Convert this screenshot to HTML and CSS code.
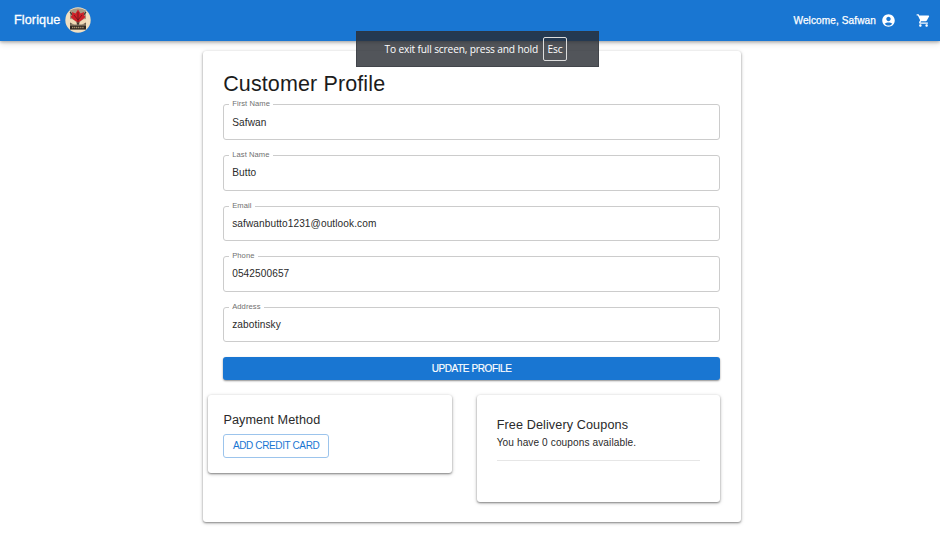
FILE: index.html
```html
<!DOCTYPE html>
<html lang="en">
<head>
<meta charset="utf-8">
<title>Florique - Customer Profile</title>
<link rel="stylesheet" href="styles.css">
</head>
<body>
<header class="appbar">
  <span class="brand">Florique</span>
  <svg class="logo" viewBox="0 0 26 26">
    <circle cx="13" cy="13" r="12.7" fill="#f1dfc0"/>
    <path d="M5 3.5 Q13 -1 21 3.5 V22.5 H5Z" fill="#a99a82"/>
    <path d="M13 9v9M5 5l8 10 8-10M5 17l8-1 8 1" stroke="#3c3029" stroke-width="1.2" fill="none"/>
    <path d="M5 12q5 0 7 5-5 1-7-2zM21 12q-5 0-7 5 5 1 7-2z" fill="#f0d9b6"/>
    <path d="M13 2.5l2.5 4L19 5l-.3 3 1.8 2-3.5 3-4 2.5L9 13l-3.500-3L7.300 8 7 5l3.500 1.500z" fill="#cf2027"/>
    <path d="M13 5v10M9 8l4 5 4-5" stroke="#641719" stroke-width=".8" fill="none"/>
    <path d="M5 18.500h16v4H5z" fill="#2e2620"/>
    <path d="M7 20.500h12" stroke="#a58e6e" stroke-width="1.300" stroke-dasharray="1.300 .6"/>
  </svg>
  <div class="account">
    <span class="welcome">Welcome, Safwan</span>
    <svg class="icon" viewBox="0 0 24 24"><path d="M12 2C6.480 2 2 6.480 2 12s4.480 10 10 10 10-4.480 10-10S17.520 2 12 2m0 4c1.930 0 3.500 1.570 3.500 3.500S13.930 13 12 13s-3.500-1.570-3.500-3.500S10.070 6 12 6m0 14c-2.030 0-4.430-.82-6.140-2.880C7.550 15.800 9.680 15 12 15s4.450.8 6.140 2.120C16.430 19.180 14.030 20 12 20"/></svg>
    <svg class="icon cart" viewBox="0 0 24 24"><path d="M7 18c-1.100 0-1.990.9-1.990 2S5.900 22 7 22s2-.9 2-2-.9-2-2-2M1 2v2h2l3.600 7.590-1.350 2.450c-.16.280-.25.610-.25.960 0 1.100.9 2 2 2h12v-2H7.420c-.14 0-.25-.11-.25-.25l.03-.12.900-1.630h7.450c.75 0 1.410-.41 1.750-1.030l3.580-6.490c.08-.14.120-.31.120-.48 0-.55-.45-1-1-1H5.210l-.94-2zm16 16c-1.100 0-1.990.9-1.990 2s.89 2 1.990 2 2-.9 2-2-.9-2-2-2"/></svg>
  </div>
</header>
<main class="profile">
  <h1>Customer Profile</h1>
  <form class="fields">
    <div class="field"><label>First Name</label><span>Safwan</span></div>
    <div class="field"><label>Last Name</label><span>Butto</span></div>
    <div class="field"><label>Email</label><span>safwanbutto1231@outlook.com</span></div>
    <div class="field"><label>Phone</label><span>0542500657</span></div>
    <div class="field"><label>Address</label><span>zabotinsky</span></div>
    <button type="button" class="update">UPDATE PROFILE</button>
  </form>
  <div class="panels">
    <section class="panel payment">
      <h2>Payment Method</h2>
      <button type="button" class="add">ADD CREDIT CARD</button>
    </section>
    <section class="panel coupons">
      <h2>Free Delivery Coupons</h2>
      <p>You have 0 coupons available.</p>
      <hr>
    </section>
  </div>
</main>
<div class="toast"><span>To exit full screen, press and hold</span><kbd>Esc</kbd></div>
</body>
</html>
```
FILE: styles.css
```css
* { box-sizing: border-box; }
body {
  margin: 0;
  background: #fff;
  color: #2a2a2a;
  font-family: "Liberation Sans", Arial, sans-serif;
  font-size: 10.1px;
  height: 535px;
  overflow: hidden;
}
h1, h2, p { margin: 0; font-weight: 400; white-space: nowrap; }
.appbar {
  display: flex;
  align-items: center;
  height: 40.500px;
  padding: 0 9px 0 14px;
  background: #1976d2;
  color: #fff;
  box-shadow: 0 1px 3px rgba(0,0,0,.3), 0 3px 6px rgba(0,0,0,.12);
}
.brand { font-size: 12.650px; letter-spacing: .1px; -webkit-text-stroke: .3px #fff; }
.logo { width: 26px; height: 26px; margin-left: 5px; }
.account { display: flex; align-items: center; margin-left: auto; }
.welcome { font-size: 10.100px; letter-spacing: .09px; -webkit-text-stroke: .25px #fff; }
.icon { width: 15px; height: 15px; margin-left: 5px; fill: #fff; }
.cart { margin-left: 20px; }
.profile {
  width: 537.500px;
  height: 471px;
  margin: 10px 0 0 203px;
  padding: 20px 20.500px 20px 20.200px;
  border-radius: 3px;
  box-shadow: 0 1px 2px rgba(0,0,0,.38), 0 1px 4px rgba(0,0,0,.2);
}
h1 { font-size: 21.500px; line-height: 27px; letter-spacing: .12px; color: #1c1c1c; }
.fields { display: flex; flex-direction: column; gap: 15px; margin-top: 6.900px; }
.field {
  position: relative;
  display: flex;
  align-items: center;
  height: 35.600px;
  padding-left: 8px;
  border: 1px solid #ccc;
  border-radius: 3px;
  letter-spacing: .1px;
}
.field label {
  position: absolute;
  top: -6px;
  left: 5px;
  padding: 0 3px;
  background: #fff;
  color: #707070;
  font-size: 7.600px;
  line-height: 10px;
  letter-spacing: .07px;
}
button { font: inherit; font-size: 10px; padding: 0; border-radius: 3px; }
.update {
  height: 23px;
  border: 0;
  background: #1976d2;
  color: #fff;
  letter-spacing: -.4px;
  -webkit-text-stroke: .15px #fff;
  box-shadow: 0 1px 2px rgba(0,0,0,.45);
}
.panels { display: flex; align-items: flex-start; gap: 25.200px; margin: 14.600px 0 0 -15px; }
.panel {
  width: 243.600px;
  border-radius: 3px;
  box-shadow: 0 1px 2px rgba(0,0,0,.4), 0 1px 4px rgba(0,0,0,.2);
}
.payment { height: 78.500px; padding: 15px 15px 15px 15.200px; }
.coupons { height: 107px; padding: 20px; }
h2 { font-size: 12.650px; line-height: 20px; letter-spacing: .1px; }
.add {
  width: 105.500px;
  height: 24px;
  margin-top: 4px;
  border: 1px solid #9cc4ec;
  background: #fff;
  color: #1976d2;
  letter-spacing: -.37px;
}
.coupons p { line-height: 15px; letter-spacing: .1px; }
hr { margin: 10px 0 0; border: 0; border-top: 1px solid #e6e6e6; }
.toast {
  position: absolute;
  top: 31px;
  left: 356px;
  display: flex;
  align-items: center;
  gap: 5px;
  width: 243px;
  height: 36px;
  padding-left: 27.500px;
  border: 1px solid rgba(50,54,60,.5);
  background: rgba(39,43,49,.8);
  color: #fff;
  font-family: "Open Sans", "Noto Sans", sans-serif;
  font-size: 10.2px;
  letter-spacing: -.16px;
  white-space: nowrap;
}
.toast kbd {
  width: 24px;
  height: 24px;
  border: 1px solid #ddd;
  border-radius: 2px;
  font: inherit;
  line-height: 22px;
  text-align: center;
}
```
